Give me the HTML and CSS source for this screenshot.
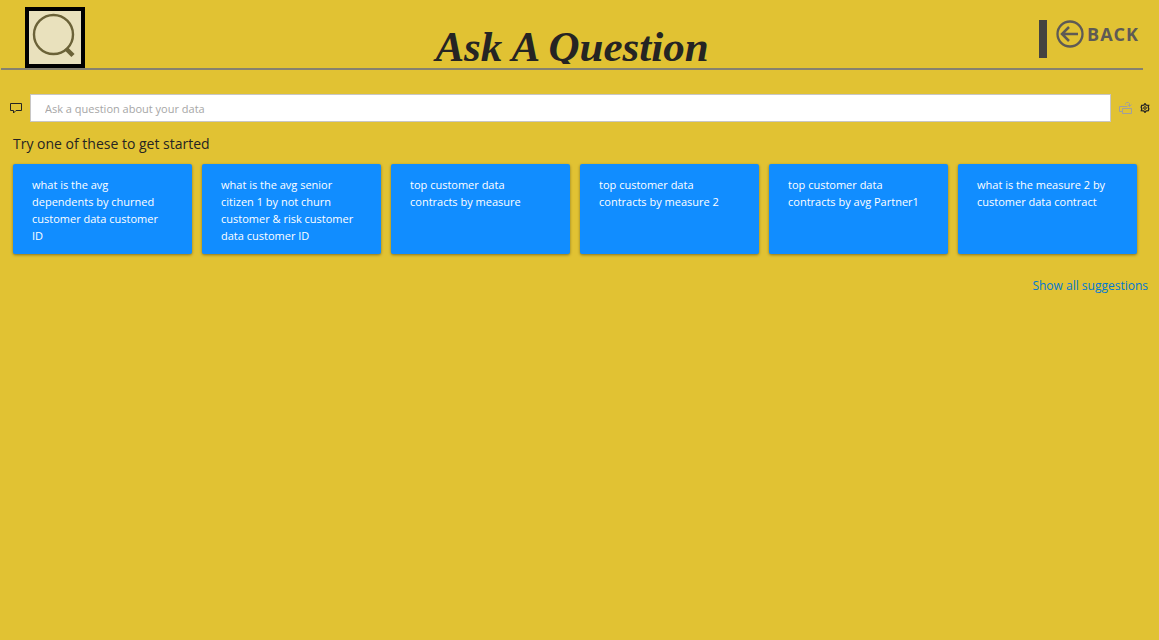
FILE: index.html
```html
<!DOCTYPE html>
<html lang="en">
<head>
<meta charset="utf-8">
<meta name="viewport" content="width=device-width, initial-scale=1">
<title>Ask A Question</title>
<link rel="stylesheet" href="styles.css">
</head>
<body>
<header class="header">
  <div class="logo">
    <svg class="logo-icon" viewBox="0 0 60 61" aria-hidden="true">
      <rect x="2" y="2" width="56" height="57" fill="#e9e1bd" stroke="#000" stroke-width="4"/>
      <circle cx="28.500" cy="27.500" r="19.500" fill="none" stroke="#6b6238" stroke-width="2.400"/>
      <path d="M41 41.500l7 7" stroke="#6b6238" stroke-width="4.500"/>
    </svg>
  </div>
  <h1 class="title">Ask A Question</h1>
  <div class="nav">
    <span class="nav-bar"></span>
    <button class="back" type="button">
      <svg class="back-icon" viewBox="0 0 28 28" aria-hidden="true" fill="none" stroke="#5e5a55">
        <circle cx="14" cy="14" r="12.500" stroke-width="2.300"/>
        <path d="M22 14H6.500M13 7l-7 7 7 7" stroke-width="2.500"/>
      </svg>
      <span>BACK</span>
    </button>
  </div>
</header>
<main class="main">
  <form class="ask">
    <svg class="ask-icon" viewBox="0 0 12 12" aria-hidden="true" fill="none" stroke="#252423">
      <path d="M.5 1.500h11v7H6L3.500 11V8.500h-3z"/>
    </svg>
    <input class="ask-input" type="text" placeholder="Ask a question about your data" aria-label="Ask a question about your data">
    <button class="tool" type="button" aria-label="Turn this result into a visual">
      <svg class="convert-icon" viewBox="0 0 13 13" fill="none" stroke="#a19f9d">
        <path d="M3.500 6.500h9v5h-9zM3 9.500H.5v-5h8M6.500 2.500v-1l1-1h2l1 1v3M8.500 2.500l2 2 2-2"/>
      </svg>
    </button>
    <button class="tool" type="button" aria-label="Settings">
      <svg class="gear-icon" viewBox="0 0 10 10" fill="none" stroke="#252423">
        <path stroke-width="1.300" d="M5 .6l1.200 1.500 2.500.3-.5 1.800.6 1.600-.5 1.800-2.100.3L5 9.400 3.800 7.900l-2.500-.3.500-1.800-.6-1.600.5-1.800 2.100-.3z"/>
        <circle cx="5" cy="5" r="1.300"/>
      </svg>
    </button>
  </form>
  <h2 class="hint">Try one of these to get started</h2>
  <div class="cards">
    <button class="card" type="button">what is the avg dependents by churned customer data customer ID</button>
    <button class="card" type="button">what is the avg senior citizen 1 by not churn customer &amp; risk customer data customer ID</button>
    <button class="card" type="button">top customer data contracts by measure</button>
    <button class="card" type="button">top customer data contracts by measure 2</button>
    <button class="card" type="button">top customer data contracts by avg Partner1</button>
    <button class="card" type="button">what is the measure 2 by customer data contract</button>
  </div>
  <a class="more" href="#">Show all suggestions</a>
</main>
</body>
</html>
```
FILE: styles.css
```css
* {
  box-sizing: border-box;
}

body {
  margin: 0;
  min-height: 100vh;
  background: #e1c233;
  color: #252423;
  font-family: "Open Sans", "Noto Sans", sans-serif;
  font-size: 11px;
}

button {
  margin: 0;
  padding: 0;
  border: 0;
  background: none;
  color: inherit;
  font: inherit;
  cursor: pointer;
}

svg {
  display: block;
}

.header {
  display: grid;
  grid-template-columns: 1fr auto 1fr;
  margin: 0 16px 0 1px;
  padding-top: 7px;
  border-bottom: 2px solid #85816f;
}

.logo {
  padding-left: 24px;
}

.logo-icon {
  width: 60px;
  height: 61px;
}

.title {
  align-self: end;
  height: 48px;
  margin: 0 0 4px;
  padding: 0 4px;
  overflow: hidden;
  font-family: "Liberation Serif", serif;
  font-size: 43px;
  font-style: italic;
  font-weight: 700;
  line-height: 61px;
}

.nav {
  display: flex;
  align-items: flex-start;
  justify-content: flex-end;
  gap: 9px;
  padding: 13px 4px 0 0;
}

.nav-bar {
  width: 8px;
  height: 38px;
  background: #444340;
}

.back {
  display: flex;
  align-items: center;
  gap: 3px;
  color: #5e5a55;
  font-size: 18px;
  font-weight: 700;
  line-height: 28px;
  letter-spacing: 1px;
}

.back-icon {
  width: 28px;
  height: 28px;
}

.main {
  display: flex;
  flex-direction: column;
  padding: 24px 9px 0 10px;
}

.ask {
  display: flex;
  align-items: center;
  gap: 8px;
}

.ask-icon {
  width: 12px;
  height: 12px;
}

.ask-input {
  flex: 1;
  min-width: 0;
  height: 28px;
  padding: 0 14px;
  border: 1px solid #c8c6c4;
  background: #fff;
  color: #252423;
  font: inherit;
}

.ask-input::placeholder {
  color: #a6a6a6;
  opacity: 1;
}

.convert-icon {
  width: 13px;
  height: 13px;
}

.gear-icon {
  width: 10px;
  height: 10px;
}

.hint {
  margin: 12px 3px 10px;
  font-size: 14px;
  font-weight: 400;
  line-height: 20px;
}

.cards {
  display: grid;
  grid-template-columns: repeat(6, 1fr);
  gap: 10px;
  margin: 0 13px 0 3px;
}

.card {
  display: flex;
  align-items: flex-start;
  min-height: 90px;
  padding: 12px 24px 10px 19px;
  border-radius: 2px;
  background: #118dff;
  box-shadow: 0 1px 3px rgba(0, 0, 0, 0.4);
  color: #fff;
  line-height: 17px;
  text-align: left;
}

.more {
  align-self: flex-end;
  margin: 22px 2px 0;
  color: #0078d4;
  font-size: 12px;
  line-height: 20px;
  text-decoration: none;
}
```
